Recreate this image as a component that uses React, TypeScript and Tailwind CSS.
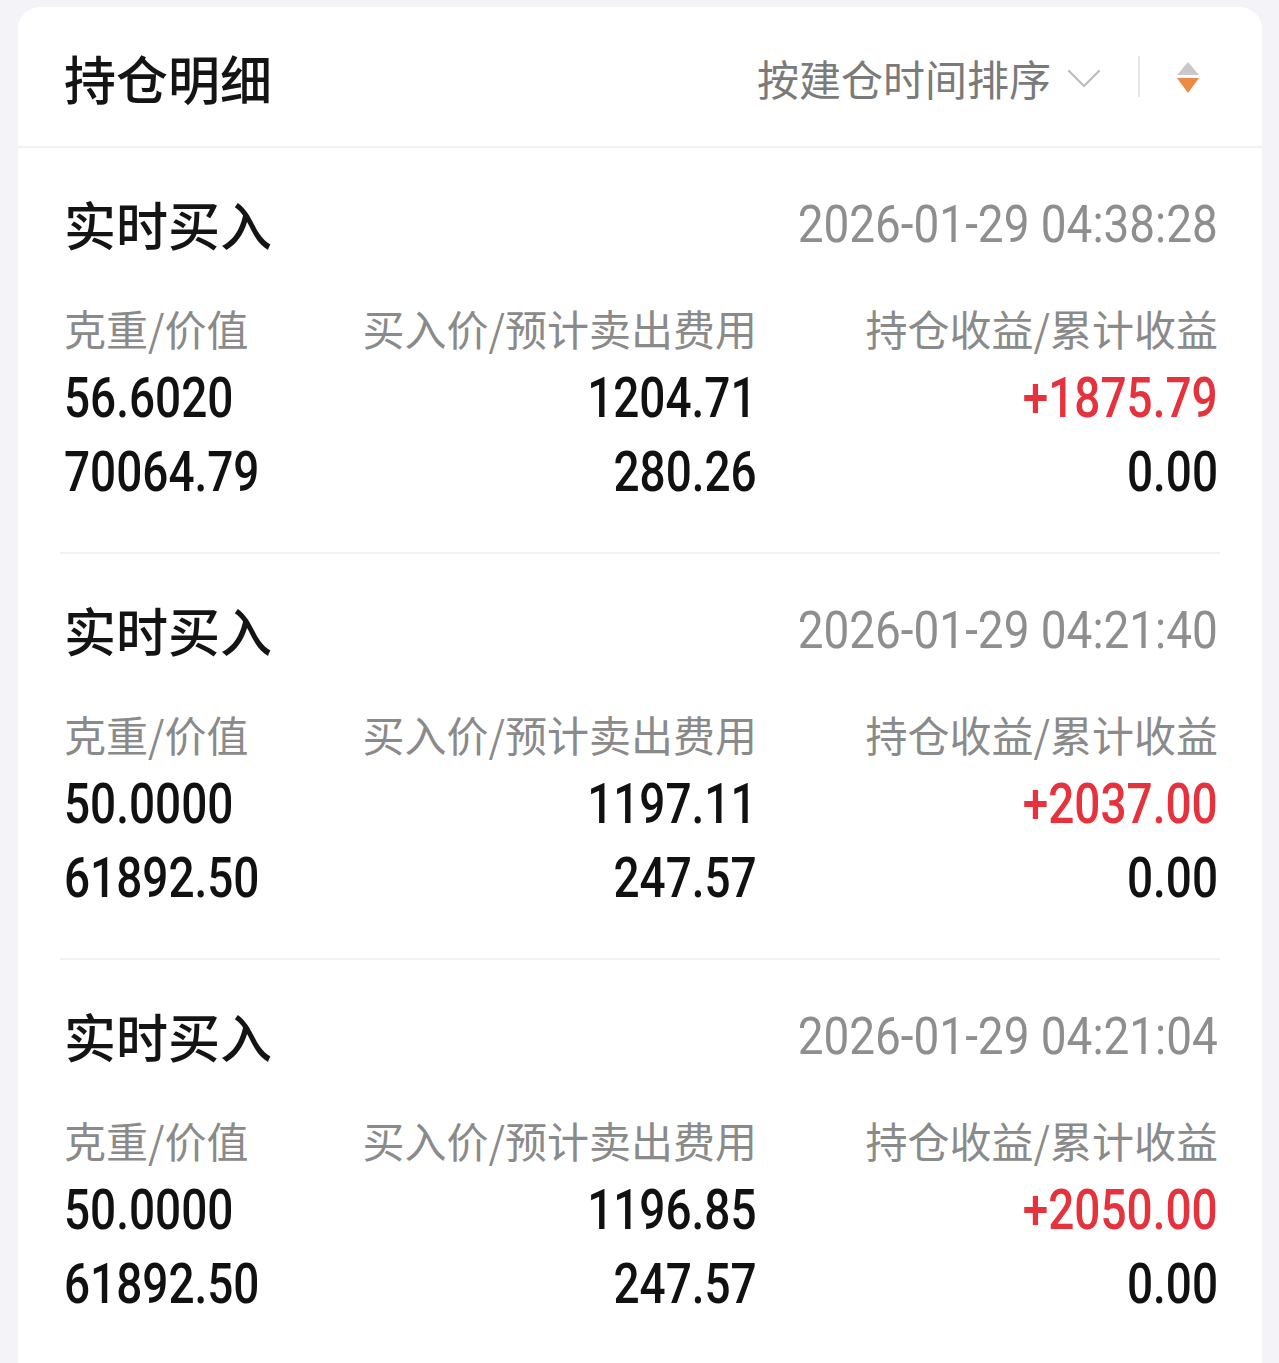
import React from 'react';

type Position = {
  time: string;
  weight: string;
  value: string;
  buyPrice: string;
  sellFee: string;
  profit: string;
  total: string;
};

const positions: Position[] = [
  { time: '2026-01-29 04:38:28', weight: '56.6020', value: '70064.79', buyPrice: '1204.71', sellFee: '280.26', profit: '+1875.79', total: '0.00' },
  { time: '2026-01-29 04:21:40', weight: '50.0000', value: '61892.50', buyPrice: '1197.11', sellFee: '247.57', profit: '+2037.00', total: '0.00' },
  { time: '2026-01-29 04:21:04', weight: '50.0000', value: '61892.50', buyPrice: '1196.85', sellFee: '247.57', profit: '+2050.00', total: '0.00' },
];

const cjk = "font-['Noto_Sans_CJK_SC',sans-serif]";
// no condensed DIN-like face installed, so Roboto is squeezed horizontally
const num = "font-['Roboto','Noto_Sans_CJK_SC',sans-serif]";

function SortIcon() {
  return (
    <svg width="22" height="32" viewBox="0 0 22 32">
      <path d="M11 0 L22 13 L0 13 Z" fill="#c9c9c9" />
      <path d="M0 16 L22 16 L11 31 Z" fill="#ec8a45" />
    </svg>
  );
}

function Chevron() {
  return (
    <svg width="34" height="20" viewBox="0 0 34 20">
      <path d="M2 2 L17 17 L32 2" fill="none" stroke="#bdbdbd" strokeWidth="2.2" strokeLinecap="round" strokeLinejoin="round" />
    </svg>
  );
}

function Num({ children, right }: { children: React.ReactNode; right?: boolean }) {
  return (
    <span className={`inline-block whitespace-nowrap scale-x-[0.82] ${right ? 'origin-right' : 'origin-left'}`}>
      {children}
    </span>
  );
}

function PositionItem({ p, last }: { p: Position; last: boolean }) {
  return (
    <div className="px-[42px] pt-[36px]">
      <div className={`pl-[4px] pr-[2px] ${last ? 'pb-[40px]' : 'pb-[43px] border-b-2 border-[#f1f1f3]'}`}>
        <div className="h-[80px] flex items-center justify-between">
          <span className={`${cjk} text-[52px] leading-none font-medium text-[#141414]`}>实时买入</span>
          <span className={`${num} text-[51px] leading-none text-[#8e8e8e]`}>
            <span className="inline-block whitespace-nowrap scale-x-[0.9] origin-right">{p.time}</span>
          </span>
        </div>
        <div className={`mt-[36px] h-[56px] flex items-center ${cjk} text-[42px] leading-none text-[#8a8a8a]`}>
          <span className="w-[297px]">克重/价值</span>
          <span className="w-[396px] text-right">买入价/预计卖出费用</span>
          <span className="flex-1 text-right">持仓收益/累计收益</span>
        </div>
        <div className={`mt-[5px] h-[74px] flex items-center ${num} text-[56px] leading-none font-medium text-[#111]`}>
          <span className="w-[297px]"><Num>{p.weight}</Num></span>
          <span className="w-[396px] text-right"><Num right>{p.buyPrice}</Num></span>
          <span className="flex-1 text-right text-[#e5323c]"><Num right>{p.profit}</Num></span>
        </div>
        <div className={`h-[74px] flex items-center ${num} text-[56px] leading-none font-medium text-[#111]`}>
          <span className="w-[297px]"><Num>{p.value}</Num></span>
          <span className="w-[396px] text-right"><Num right>{p.sellFee}</Num></span>
          <span className="flex-1 text-right"><Num right>{p.total}</Num></span>
        </div>
      </div>
    </div>
  );
}

export default function App(): React.JSX.Element {
  return (
    <div className="min-h-[1363px] bg-[#f3f3f8] pl-[18px] pr-[17px] pt-[7px]">
      <div className="bg-white rounded-t-[22px] min-h-[1356px]">
        <div className="h-[141px] flex items-center justify-between pl-[46px] pr-[63px] border-b-2 border-[#f1f1f3]">
          <h1 className={`${cjk} text-[52px] leading-none font-medium text-[#141414] mt-[3px]`}>持仓明细</h1>
          <div className="flex items-center">
            <span className={`${cjk} text-[42px] leading-none text-[#7a7a7a] mt-[3px]`}>按建仓时间排序</span>
            <span className="ml-[16px] mt-[4px]"><Chevron /></span>
            <span className="ml-[37px] w-[2px] h-[41px] bg-[#e6e6e6]" />
            <span className="ml-[37px] mt-[2px]"><SortIcon /></span>
          </div>
        </div>
        {positions.map((p, i) => (
          <PositionItem key={i} p={p} last={i === positions.length - 1} />
        ))}
      </div>
    </div>
  );
}
